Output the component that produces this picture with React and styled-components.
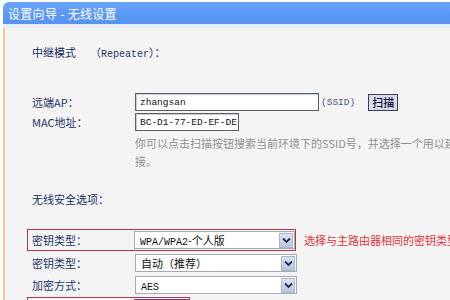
import React from "react";
import styled, { createGlobalStyle } from "styled-components";

const GlobalStyle = createGlobalStyle`
  html, body {
    margin: 0;
    padding: 0;
    background: #ffffff;
    overflow: hidden;
  }
  body {
    font-family: "Noto Sans CJK SC", "Liberation Sans", sans-serif;
    font-size: 11px;
  }
`;

const Frame = styled.div`
  width: 450px;
  height: 300px;
  padding: 2px 0 0 3px;
  box-sizing: border-box;
  display: flex;
  flex-direction: column;
  overflow: hidden;
`;

const TitleBar = styled.div`
  height: 22px;
  flex-shrink: 0;
  display: flex;
  align-items: center;
  padding-left: 5px;
  border-radius: 6px 0 0 0;
  background: linear-gradient(#6ca6fb, #5b97f4 60%, #5893f1);
  color: #ffffff;
  font-size: 12px;
  letter-spacing: 0.3px;
`;

const Band = styled.div`
  height: 4px;
  flex-shrink: 0;
  background: #e8ecf3;
`;

const Content = styled.div`
  flex: 1;
  background: #f4f4f4;
  border-left: 2px solid #f4c992;
  padding: 15px 0 0 27px;
`;

const Heading = styled.div`
  display: flex;
  align-items: center;
  height: 18px;
  color: #142f5e;
  font-size: 11px;
  margin-top: ${(p) => p.$top || 0}px;
`;

const Mode = styled.span`
  margin-left: 14px;
  color: #1b3566;
`;

const Mono = styled.span`
  font-family: "Liberation Mono", "Noto Sans CJK SC", monospace;
  font-size: ${(p) => p.$size || 10}px;
`;

const Row = styled.div`
  display: flex;
  align-items: center;
  height: 18px;
  margin-top: ${(p) => p.$top || 0}px;
`;

const MarkedRow = styled.div`
  display: flex;
  align-items: center;
  margin-top: ${(p) => p.$top || 0}px;
  margin-left: -5px;
`;

const RedBox = styled.div`
  display: flex;
  align-items: center;
  border: 1px solid #b5364a;
  padding: 1px 0 1px 4px;
`;

const Label = styled.div`
  width: ${(p) => p.$w || 103}px;
  flex-shrink: 0;
  color: #1b3566;
  white-space: nowrap;
`;

const TextInput = styled.div`
  box-sizing: border-box;
  width: ${(p) => p.$w}px;
  height: 18px;
  display: flex;
  align-items: center;
  padding-left: 4px;
  background: #ffffff;
  border: 1px solid #56606c;
  box-shadow: inset 1px 1px 0 #c9ccd0;
  color: #111111;
  font-family: "Liberation Mono", monospace;
  font-size: 9.5px;
`;

const Note = styled.span`
  margin-left: 2px;
  color: #4a5a78;
  font-family: "Liberation Mono", monospace;
  font-size: 9.5px;
`;

const ScanButton = styled.button`
  margin-left: 13px;
  height: 17px;
  width: 30px;
  padding: 0;
  background: #d9dbf1;
  border: 1px solid #3c3c50;
  color: #101030;
  font-family: "Noto Sans CJK SC", sans-serif;
  font-size: 11px;
  font-weight: 500;
  line-height: 14px;
`;

const Help = styled.div`
  margin: 3px 0 0 103px;
  width: 330px;
  color: #8f8f8f;
  line-height: 18px;
  white-space: nowrap;
`;

const Select = styled.div`
  box-sizing: border-box;
  width: ${(p) => p.$w || 162}px;
  height: 18px;
  display: flex;
  align-items: center;
  background: #ffffff;
  border: 1px solid #a4abb6;
  color: #111111;
`;

const SelectText = styled.div`
  flex: 1;
  padding-left: 5px;
  white-space: nowrap;
  overflow: hidden;
`;

const Arrow = styled.div`
  width: 14px;
  height: 15px;
  margin-right: 1px;
  display: flex;
  align-items: center;
  justify-content: center;
  background: linear-gradient(#dbe3f1, #b8c6dc);
  border: 1px solid #aab6ca;
  box-sizing: border-box;
`;

const Hint = styled.div`
  margin-left: 8px;
  color: #e2323c;
  white-space: nowrap;
`;

const Spacer = styled.div`
  width: 102px;
  height: 16px;
`;

const PassInput = styled.div`
  width: 55px;
  height: 16px;
  border-top: 2px solid #8a3a70;
`;

function Chevron() {
  return (
    <svg width="9" height="7" viewBox="0 0 9 7">
      <path d="M1 1.5 L4.5 5 L8 1.5" fill="none" stroke="#1d2f5a" strokeWidth="1.8" />
    </svg>
  );
}

function Dropdown({ children, w }) {
  return (
    <Select $w={w}>
      <SelectText>{children}</SelectText>
      <Arrow>
        <Chevron />
      </Arrow>
    </Select>
  );
}

export default function App() {
  return (
    <>
      <GlobalStyle />
      <Frame>
        <TitleBar>设置向导 - 无线设置</TitleBar>
        <Band />
        <Content>
          <Heading>
            中继模式
            <Mode>
              （<Mono>Repeater</Mono>）：
            </Mode>
          </Heading>

          <Row $top={32}>
            <Label>远端AP：</Label>
            <TextInput $w={184}>zhangsan</TextInput>
            <Note>(SSID)</Note>
            <ScanButton>扫描</ScanButton>
          </Row>
          <Row $top={2}>
            <Label>MAC地址：</Label>
            <TextInput $w={104}>BC-D1-77-ED-EF-DE</TextInput>
          </Row>
          <Help>
            你可以点击扫描按钮搜索当前环境下的SSID号，并选择一个用以建立连
            <br />
            接。
          </Help>

          <Heading $top={20}>无线安全选项：</Heading>

          <MarkedRow $top={21}>
            <RedBox>
              <Label $w={102}>密钥类型：</Label>
              <Dropdown w={161}>
                <Mono>WPA/WPA2</Mono>-个人版
              </Dropdown>
            </RedBox>
            <Hint>选择与主路由器相同的密钥类型</Hint>
          </MarkedRow>
          <Row $top={3}>
            <Label>密钥类型：</Label>
            <Dropdown>自动（推荐）</Dropdown>
          </Row>
          <Row $top={4}>
            <Label>加密方式：</Label>
            <Dropdown>
              <Mono>AES</Mono>
            </Dropdown>
          </Row>
          <MarkedRow $top={3}>
            <RedBox>
              <Spacer />
              <PassInput />
            </RedBox>
          </MarkedRow>
        </Content>
      </Frame>
    </>
  );
}
